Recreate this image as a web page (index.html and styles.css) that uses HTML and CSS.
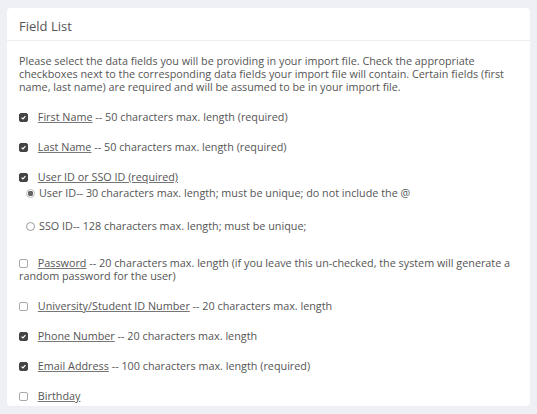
FILE: index.html
```html
<!DOCTYPE html>
<html lang="en">
<head>
  <meta charset="UTF-8" />
  <meta name="viewport" content="width=device-width, initial-scale=1.0"/>
  <title>Field List</title>
  <link rel="stylesheet" href="styles.css">
</head>
<body>
  <div class="card">
    <div class="card-header">Field List</div>

    <div class="card-body">
      <p class="intro">Please select the data fields you will be providing in your import file. Check the appropriate checkboxes next to the corresponding data fields your import file will contain. Certain fields (first name, last name) are required and will be assumed to be in your import file.</p>

      <div class="field">
        <span class="box on"><svg viewBox="0 0 9 9"><path d="M2 4.6 L3.8 6.3 L7 2.8" /></svg></span>
        <span class="name">First Name</span> -- 50 characters max. length (required)
      </div>

      <div class="field">
        <span class="box on"><svg viewBox="0 0 9 9"><path d="M2 4.6 L3.8 6.3 L7 2.8" /></svg></span>
        <span class="name">Last Name</span> -- 50 characters max. length (required)
      </div>

      <div class="field">
        <span class="box on"><svg viewBox="0 0 9 9"><path d="M2 4.6 L3.8 6.3 L7 2.8" /></svg></span>
        <span class="name">User ID or SSO ID (required)</span>
      </div>
      <div class="option first">
        <span class="radio on"></span>User ID-- 30 characters max. length; must be unique; do not include the @
      </div>
      <div class="option second">
        <span class="radio"></span>SSO ID-- 128 characters max. length; must be unique;
      </div>

      <div class="field after-options">
        <span class="box"></span>
        <span class="name">Password</span> -- 20 characters max. length (if you leave this un-checked, the system will generate a random password for the user)
      </div>

      <div class="field">
        <span class="box"></span>
        <span class="name">University/Student ID Number</span> -- 20 characters max. length
      </div>

      <div class="field">
        <span class="box on"><svg viewBox="0 0 9 9"><path d="M2 4.6 L3.8 6.3 L7 2.8" /></svg></span>
        <span class="name">Phone Number</span> -- 20 characters max. length
      </div>

      <div class="field">
        <span class="box on"><svg viewBox="0 0 9 9"><path d="M2 4.6 L3.8 6.3 L7 2.8" /></svg></span>
        <span class="name">Email Address</span> -- 100 characters max. length (required)
      </div>

      <div class="field">
        <span class="box"></span>
        <span class="name">Birthday</span>
      </div>
    </div>
  </div>
</body>
</html>
```

FILE: styles.css
```css
body {
  font-family: 'Open Sans', 'Noto Sans', sans-serif;
  margin: 0;
  padding: 8px 7px;
  background: #eef0f5;
  color: #555;
  font-size: 10.8px;
  line-height: 13px;
  height: 414px;
  box-sizing: border-box;
  overflow: hidden;
}

.card {
  background: #fff;
  border-radius: 4px;
  height: 398px;
  overflow: hidden;
}

.card-header {
  height: 33px;
  padding: 3px 12px 0;
  box-sizing: border-box;
  line-height: 30px;
  font-size: 13px;
  color: #555;
  border-bottom: 1px solid #eceef2;
}

.card-body {
  padding: 13px 12px 11px;
}

.intro {
  margin: 0;
}

.field {
  margin-top: 17px;
}

.field .name {
  text-decoration: underline;
  text-decoration-color: #777;
  text-underline-offset: 1px;
}

.box {
  display: inline-block;
  box-sizing: border-box;
  width: 9px;
  height: 9px;
  margin-right: 7px;
  border: 1px solid #aaa;
  border-radius: 2px;
  vertical-align: -1px;
}

.box.on {
  background: #444;
  border-color: #444;
}

.box svg {
  display: block;
  width: 7px;
  height: 7px;
}

.box svg path {
  fill: none;
  stroke: #fff;
  stroke-width: 1.6;
}

.option {
  padding-left: 7px;
}

.option.first {
  margin-top: 3px;
}

.option.second {
  margin-top: 20px;
}

.radio {
  display: inline-block;
  box-sizing: border-box;
  width: 9px;
  height: 9px;
  margin-right: 4px;
  border: 1px solid #999;
  border-radius: 50%;
  vertical-align: -1px;
}

.radio.on {
  border-color: #bbb;
  background: radial-gradient(circle, #666 0 2.6px, #fff 3px);
}

.field.after-options {
  margin-top: 24px;
}
```
